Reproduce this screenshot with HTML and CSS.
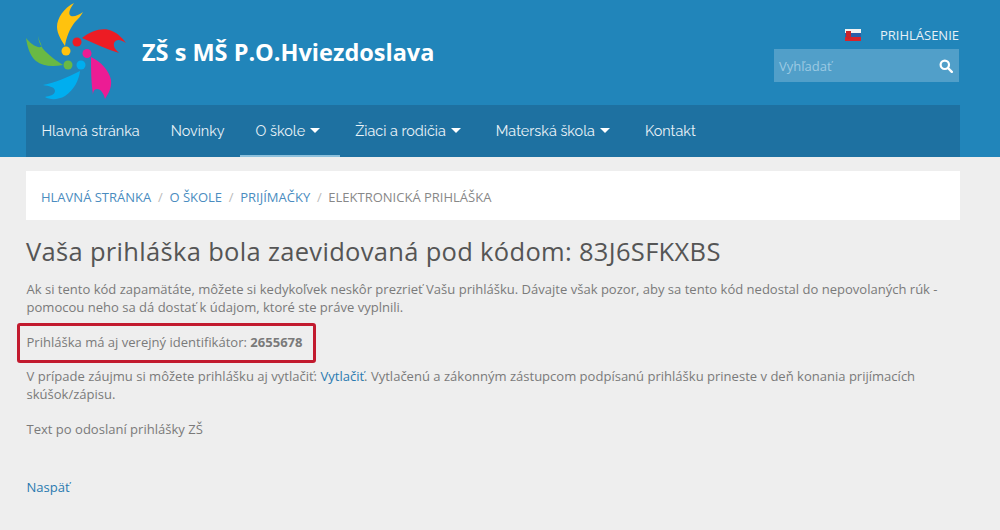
FILE: index.html
```html
<!DOCTYPE html>
<html lang="sk">
<head>
<meta charset="utf-8">
<title>Electronická prihláška</title>
<link rel="stylesheet" href="styles.css">
</head>
<body>
<header class="site-header">
  <div class="top">
    <a class="brand" href="#">
      <svg class="logo" width="100" height="100" viewBox="26 0 100 100" aria-hidden="true">
        <path fill="#ffc20e" d="M74 3C64 8 57 18 57 27C57 34 62 41 65 46C66 38 70 28 75 22C78 19 81 16 83 12C79 15 74 17 71 16C67 14 71 7 74 3Z"/>
        <path fill="#ed1c24" d="M82 38C92 30 104 27 112 31C119 34 123 39 126 43C120 39 116 39 114 43C113 47 116 50 119 53C106 49 94 43 82 38Z"/>
        <path fill="#69b944" d="M38 35C38 42 42 48 46 52C51 57 57 61 63 65C52 67 42 66 36 61C30 56 27 46 26 38C30 43 36 48 41 47C43 45 38 40 38 35Z"/>
        <path fill="#00aeef" d="M80 71C79 80 74 90 65 96C58 100 50 100 45 97C49 96 55 95 55 91C55 87 49 86 43 85C55 83 68 77 80 71Z"/>
        <path fill="#ec1c94" d="M91 57C101 62 109 70 111 80C112 88 108 94 105 99C104 94 101 89 97 89C94 89 93 92 93 95C91 82 91 69 91 57Z"/>
        <circle cx="66" cy="51" r="4.500" fill="#ffc20e"/>
        <circle cx="77" cy="42" r="4.500" fill="#ed1c24"/>
        <circle cx="87" cy="53.500" r="4.500" fill="#ec1c94"/>
        <circle cx="81" cy="65" r="4.500" fill="#00aeef"/>
        <circle cx="68" cy="65" r="4.500" fill="#69b944"/>
      </svg>
      <span class="brand-name">ZŠ s MŠ P.O.Hviezdoslava</span>
    </a>
    <div class="tools">
      <div class="tools-row">
        <svg class="flag" width="16" height="12" viewBox="0 0 16 12" aria-hidden="true">
          <rect width="16" height="4" y="0" fill="#f2f2f2"/>
          <rect width="16" height="4" y="4" fill="#2a5ea8"/>
          <rect width="16" height="4" y="8" fill="#d8232a"/>
          <path fill="#c8242b" d="M1 2h5v5c0 2-2 3-2.500 3S1 9 1 7z"/>
        </svg>
        <a class="login" href="#">PRIHLÁSENIE</a>
      </div>
      <form class="search">
        <span class="search-text">Vyhľadať</span>
        <svg width="14" height="14" viewBox="0 0 14 14" aria-hidden="true">
          <circle cx="5.800" cy="5.800" r="4.200" fill="none" stroke="#fff" stroke-width="2.200"/>
          <path d="M9 9l3.800 3.800" stroke="#fff" stroke-width="2.400" stroke-linecap="round"/>
        </svg>
      </form>
    </div>
  </div>
  <nav class="nav">
    <a href="#">Hlavná stránka</a>
    <a href="#">Novinky</a>
    <a class="active drop" href="#">O škole <i class="caret"></i></a>
    <a class="drop" href="#">Žiaci a rodičia <i class="caret"></i></a>
    <a class="drop" href="#">Materská škola <i class="caret"></i></a>
    <a href="#">Kontakt</a>
  </nav>
</header>
<main class="content">
  <ol class="crumbs">
    <li><a href="#">HLAVNÁ STRÁNKA</a></li>
    <li class="sep">/</li>
    <li><a href="#">O ŠKOLE</a></li>
    <li class="sep">/</li>
    <li><a href="#">PRIJÍMAČKY</a></li>
    <li class="sep">/</li>
    <li>ELEKTRONICKÁ PRIHLÁŠKA</li>
  </ol>
  <h1>Vaša prihláška bola zaevidovaná pod kódom: 83J6SFKXBS</h1>
  <p class="p-intro">Ak si tento kód zapamätáte, môžete si kedykoľvek neskôr prezrieť Vašu prihlášku. Dávajte však pozor, aby sa tento kód nedostal do nepovolaných rúk - pomocou neho sa dá dostať k údajom, ktoré ste práve vyplnili.</p>
  <p class="p-id"><span class="highlight">Prihláška má aj verejný identifikátor: <b>2655678</b></span></p>
  <p class="p-print">V prípade záujmu si môžete prihlášku aj vytlačiť: <a href="#">Vytlačiť</a>. Vytlačenú a zákonným zástupcom podpísanú prihlášku prineste v deň konania prijímacích skúšok/zápisu.</p>
  <p class="p-text">Text po odoslaní prihlášky ZŠ</p>
  <p class="p-back"><a href="#">Naspäť</a></p>
</main>
</body>
</html>
```

FILE: styles.css
```css
* { box-sizing: border-box; }
html, body { margin: 0; height: 100%; }
body {
  background: #eeeeee;
  color: #7a7a7a;
  font: 13.040px/18px "Open Sans", sans-serif;
  overflow: hidden;
}
a { color: #2a7ab0; text-decoration: none; }
.site-header { background: #2185ba; padding: 0 41px 0 26px; height: 157px; display: flex; flex-direction: column; }
.top { height: 105px; display: flex; justify-content: space-between; }
.brand { display: flex; align-items: center; height: 105px; }
.logo { flex: none; margin-right: 16px; align-self: flex-start; }
.brand-name { color: #fff; font-size: 23.500px; font-weight: 700; line-height: 30px; margin-top: -2px; }
.tools { width: 185px; padding-top: 25px; }
.tools-row { display: flex; align-items: center; justify-content: flex-end; height: 19px; gap: 19px; }
.flag { display: block; }
.login { color: #e6f1f7; font-size: 13px; }
.search {
  height: 33px; margin-top: 5px; background: #519fc9; display: flex;
  align-items: center; justify-content: space-between; padding: 0 6px 0 5px;
}
.search-text { color: #9ccae3; font-size: 13px; }
.nav { height: 52px; background: #1e71a1; display: flex; margin-right: -1px; }
.nav a {
  display: flex; align-items: center; gap: 5px; color: #eaf3f8;
  font: 400 14.400px "Raleway", "Lato", sans-serif; padding: 0 15.500px;
  height: 52px; border-bottom: 2px solid transparent;
}
.nav a.drop { padding-right: 19.500px; }
.nav a.active { border-bottom-color: #8cc0dc; }
.caret { display: inline-block; border: 5px solid transparent; border-top-color: #fff; border-bottom: 0; }
.content { padding: 14px 40px 0 26px; }
.crumbs {
  list-style: none; margin: 0; padding: 2px 15px 0; background: #fff; height: 49px;
  display: flex; align-items: center; gap: 6.700px; color: #888; font-size: 13px;
}
.crumbs a { color: #4a8cc0; }
.sep { color: #bbb; }
h1 { margin: 16px 0 0; font-size: 25.500px; font-weight: 400; line-height: 30px; color: #555; letter-spacing: .32px; }
p { margin: 0; padding-left: .5px; }
.p-intro { margin-top: 14px; }
.p-id { margin-top: 7px; padding-left: 0; }
.highlight {
  display: block; width: 299px; height: 40px; margin-left: -9px; padding: 0 0 0 6.500px;
  border: 3px solid #c21a2e; border-radius: 3px; line-height: 32px;
}
.p-print { margin-top: 4px; }
.p-text { margin-top: 17px; }
.p-back { margin-top: 40px; }
```
